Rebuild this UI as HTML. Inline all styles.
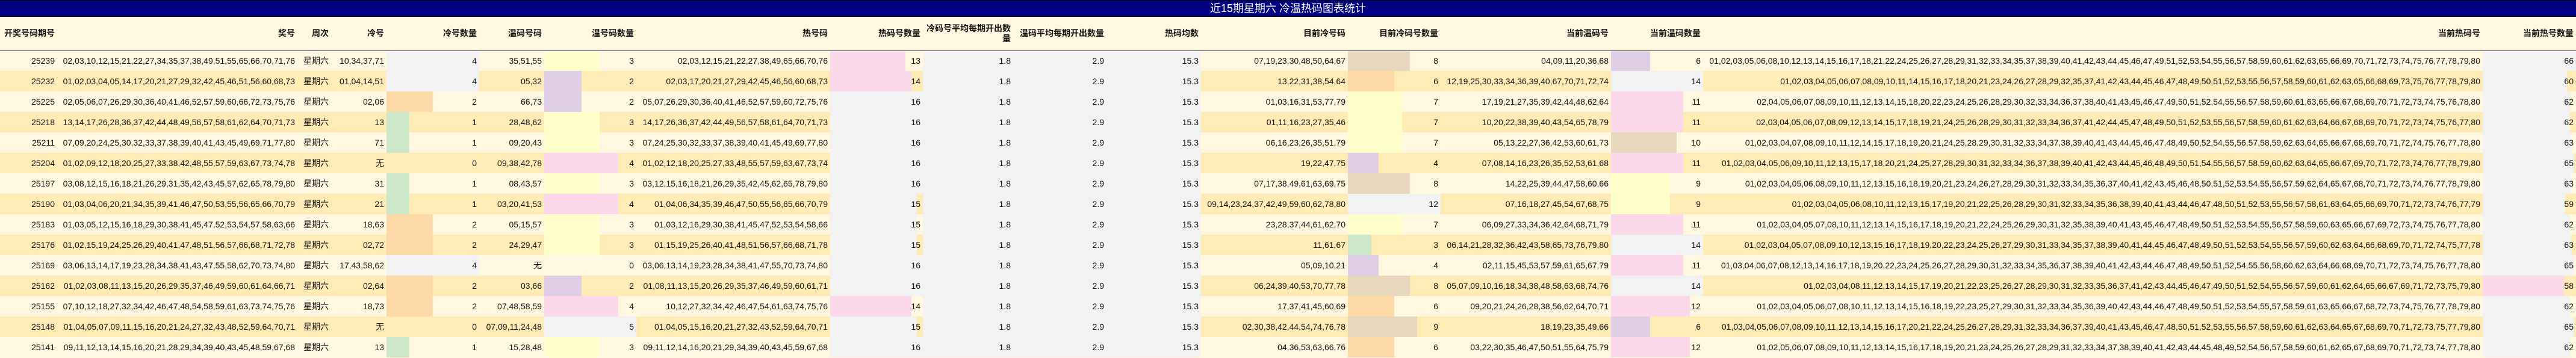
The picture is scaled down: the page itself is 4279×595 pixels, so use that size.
<!DOCTYPE html>
<html><head><meta charset="utf-8">
<style>
*{margin:0;padding:0;box-sizing:border-box}
body{width:4279px;height:595px;overflow:hidden;background:#fff7e0;font-family:"Liberation Sans","Noto Sans CJK SC",sans-serif;font-size:14px;color:#111}
.title{height:28px;background:#000080;border-top:1px solid #000;border-bottom:1px solid #000;color:#fff;text-align:center;font-size:18px;line-height:26px}
table{border-collapse:collapse;table-layout:fixed;width:4279px}
th{height:56px;font-weight:bold;text-align:right;padding:0 4px 0 0;vertical-align:middle;border-bottom:1px solid #000;line-height:17px;background:#fff7e0}
td{height:34px;text-align:right;padding:0 4px 0 0;white-space:nowrap;overflow:hidden;vertical-align:middle}
tr.a{background:#fff7e0}
tr.b{background:#ffebb6}
td.g{background:#f2f2f2}
</style></head><body>
<div class="title">近15期星期六 冷温热码图表统计</div>
<table>
<colgroup><col style="width:95px"><col style="width:399px"><col style="width:56px"><col style="width:92px"><col style="width:154px"><col style="width:108px"><col style="width:153px"><col style="width:322px"><col style="width:154px"><col style="width:150px"><col style="width:155px"><col style="width:157px"><col style="width:244px"><col style="width:154px"><col style="width:283px"><col style="width:153px"><col style="width:1295px"><col style="width:155px"></colgroup>
<tr><th>开奖号码期号</th><th>奖号</th><th>周次</th><th>冷号</th><th>冷号数量</th><th>温码号码</th><th>温号码数量</th><th>热号码</th><th>热码号数量</th><th>冷码号平均每期开出数量</th><th>温码平均每期开出数量</th><th>热码均数</th><th>目前冷号码</th><th>目前冷码号数量</th><th>当前温码号</th><th>当前温码数量</th><th>当前热码号</th><th>当前热号数量</th></tr>

<tr class="a"><td>25239</td><td>02,03,10,12,15,21,22,27,34,35,37,38,49,51,55,65,66,70,71,76</td><td>星期六</td><td>10,34,37,71</td><td style="background:linear-gradient(90deg,#f2f2f2 154px,#0000 154px)">4</td><td>35,51,55</td><td style="background:linear-gradient(90deg,#ffffcc 92px,#0000 92px)">3</td><td>02,03,12,15,21,22,27,38,49,65,66,70,76</td><td style="background:linear-gradient(90deg,#fcd9ea 125px,#0000 125px)">13</td><td class="g">1.8</td><td class="g">2.9</td><td class="g">15.3</td><td>07,19,23,30,48,50,64,67</td><td style="background:linear-gradient(90deg,#e6d7bd 103px,#0000 103px)">8</td><td>04,09,11,20,36,68</td><td style="background:linear-gradient(90deg,#e0cde6 65px,#0000 65px)">6</td><td>01,02,03,05,06,08,10,12,13,14,15,16,17,18,21,22,24,25,26,27,28,29,31,32,33,34,35,37,38,39,40,41,42,43,44,45,46,47,49,51,52,53,54,55,56,57,58,59,60,61,62,63,65,66,69,70,71,72,73,74,75,76,77,78,79,80</td><td style="background:linear-gradient(90deg,#f2f2f2 155px,#0000 155px)">66</td></tr>

<tr class="b"><td>25232</td><td>01,02,03,04,05,14,17,20,21,27,29,32,42,45,46,51,56,60,68,73</td><td>星期六</td><td>01,04,14,51</td><td style="background:linear-gradient(90deg,#f2f2f2 154px,#0000 154px)">4</td><td>05,32</td><td style="background:linear-gradient(90deg,#e0cde6 62px,#0000 62px)">2</td><td>02,03,17,20,21,27,29,42,45,46,56,60,68,73</td><td style="background:linear-gradient(90deg,#fcd9ea 135px,#0000 135px)">14</td><td class="g">1.8</td><td class="g">2.9</td><td class="g">15.3</td><td>13,22,31,38,54,64</td><td style="background:linear-gradient(90deg,#fdd9a8 77px,#0000 77px)">6</td><td>12,19,25,30,33,34,36,39,40,67,70,71,72,74</td><td style="background:linear-gradient(90deg,#f2f2f2 153px,#0000 153px)">14</td><td>01,02,03,04,05,06,07,08,09,10,11,14,15,16,17,18,20,21,23,24,26,27,28,29,32,35,37,41,42,43,44,45,46,47,48,49,50,51,52,53,55,56,57,58,59,60,61,62,63,65,66,68,69,73,75,76,77,78,79,80</td><td style="background:linear-gradient(90deg,#f2f2f2 140px,#0000 140px)">60</td></tr>

<tr class="a"><td>25225</td><td>02,05,06,07,26,29,30,36,40,41,46,52,57,59,60,66,72,73,75,76</td><td>星期六</td><td>02,06</td><td style="background:linear-gradient(90deg,#fdd9a8 77px,#0000 77px)">2</td><td>66,73</td><td style="background:linear-gradient(90deg,#e0cde6 62px,#0000 62px)">2</td><td>05,07,26,29,30,36,40,41,46,52,57,59,60,72,75,76</td><td style="background:linear-gradient(90deg,#f2f2f2 154px,#0000 154px)">16</td><td class="g">1.8</td><td class="g">2.9</td><td class="g">15.3</td><td>01,03,16,31,53,77,79</td><td style="background:linear-gradient(90deg,#ffffcc 90px,#0000 90px)">7</td><td>17,19,21,27,35,39,42,44,48,62,64</td><td style="background:linear-gradient(90deg,#fcd9ea 120px,#0000 120px)">11</td><td>02,04,05,06,07,08,09,10,11,12,13,14,15,18,20,22,23,24,25,26,28,29,30,32,33,34,36,37,38,40,41,43,45,46,47,49,50,51,52,54,55,56,57,58,59,60,61,63,65,66,67,68,69,70,71,72,73,74,75,76,78,80</td><td style="background:linear-gradient(90deg,#f2f2f2 145px,#0000 145px)">62</td></tr>

<tr class="b"><td>25218</td><td>13,14,17,26,28,36,37,42,44,48,49,56,57,58,61,62,64,70,71,73</td><td>星期六</td><td>13</td><td style="background:linear-gradient(90deg,#cce8c8 38px,#0000 38px)">1</td><td>28,48,62</td><td style="background:linear-gradient(90deg,#ffffcc 92px,#0000 92px)">3</td><td>14,17,26,36,37,42,44,49,56,57,58,61,64,70,71,73</td><td style="background:linear-gradient(90deg,#f2f2f2 154px,#0000 154px)">16</td><td class="g">1.8</td><td class="g">2.9</td><td class="g">15.3</td><td>01,11,16,23,27,35,46</td><td style="background:linear-gradient(90deg,#ffffcc 90px,#0000 90px)">7</td><td>10,20,22,38,39,40,43,54,65,78,79</td><td style="background:linear-gradient(90deg,#fcd9ea 120px,#0000 120px)">11</td><td>02,03,04,05,06,07,08,09,12,13,14,15,17,18,19,21,24,25,26,28,29,30,31,32,33,34,36,37,41,42,44,45,47,48,49,50,51,52,53,55,56,57,58,59,60,61,62,63,64,66,67,68,69,70,71,72,73,74,75,76,77,80</td><td style="background:linear-gradient(90deg,#f2f2f2 145px,#0000 145px)">62</td></tr>

<tr class="a"><td>25211</td><td>07,09,20,24,25,30,32,33,37,38,39,40,41,43,45,49,69,71,77,80</td><td>星期六</td><td>71</td><td style="background:linear-gradient(90deg,#cce8c8 38px,#0000 38px)">1</td><td>09,20,43</td><td style="background:linear-gradient(90deg,#ffffcc 92px,#0000 92px)">3</td><td>07,24,25,30,32,33,37,38,39,40,41,45,49,69,77,80</td><td style="background:linear-gradient(90deg,#f2f2f2 154px,#0000 154px)">16</td><td class="g">1.8</td><td class="g">2.9</td><td class="g">15.3</td><td>06,16,23,26,35,51,79</td><td style="background:linear-gradient(90deg,#ffffcc 90px,#0000 90px)">7</td><td>05,13,22,27,36,42,53,60,61,73</td><td style="background:linear-gradient(90deg,#e6d7bd 109px,#0000 109px)">10</td><td>01,02,03,04,07,08,09,10,11,12,14,15,17,18,19,20,21,24,25,28,29,30,31,32,33,34,37,38,39,40,41,43,44,45,46,47,48,49,50,52,54,55,56,57,58,59,62,63,64,65,66,67,68,69,70,71,72,74,75,76,77,78,80</td><td style="background:linear-gradient(90deg,#f2f2f2 147px,#0000 147px)">63</td></tr>

<tr class="b"><td>25204</td><td>01,02,09,12,18,20,25,27,33,38,42,48,55,57,59,63,67,73,74,78</td><td>星期六</td><td>无</td><td>0</td><td>09,38,42,78</td><td style="background:linear-gradient(90deg,#fcd9ea 123px,#0000 123px)">4</td><td>01,02,12,18,20,25,27,33,48,55,57,59,63,67,73,74</td><td style="background:linear-gradient(90deg,#f2f2f2 154px,#0000 154px)">16</td><td class="g">1.8</td><td class="g">2.9</td><td class="g">15.3</td><td>19,22,47,75</td><td style="background:linear-gradient(90deg,#e0cde6 51px,#0000 51px)">4</td><td>07,08,14,16,23,26,35,52,53,61,68</td><td style="background:linear-gradient(90deg,#fcd9ea 120px,#0000 120px)">11</td><td>01,02,03,04,05,06,09,10,11,12,13,15,17,18,20,21,24,25,27,28,29,30,31,32,33,34,36,37,38,39,40,41,42,43,44,45,46,48,49,50,51,54,55,56,57,58,59,60,62,63,64,65,66,67,69,70,71,72,73,74,76,77,78,79,80</td><td style="background:linear-gradient(90deg,#f2f2f2 152px,#0000 152px)">65</td></tr>

<tr class="a"><td>25197</td><td>03,08,12,15,16,18,21,26,29,31,35,42,43,45,57,62,65,78,79,80</td><td>星期六</td><td>31</td><td style="background:linear-gradient(90deg,#cce8c8 38px,#0000 38px)">1</td><td>08,43,57</td><td style="background:linear-gradient(90deg,#ffffcc 92px,#0000 92px)">3</td><td>03,12,15,16,18,21,26,29,35,42,45,62,65,78,79,80</td><td style="background:linear-gradient(90deg,#f2f2f2 154px,#0000 154px)">16</td><td class="g">1.8</td><td class="g">2.9</td><td class="g">15.3</td><td>07,17,38,49,61,63,69,75</td><td style="background:linear-gradient(90deg,#e6d7bd 103px,#0000 103px)">8</td><td>14,22,25,39,44,47,58,60,66</td><td style="background:linear-gradient(90deg,#ffffcc 98px,#0000 98px)">9</td><td>01,02,03,04,05,06,08,09,10,11,12,13,15,16,18,19,20,21,23,24,26,27,28,29,30,31,32,33,34,35,36,37,40,41,42,43,45,46,48,50,51,52,53,54,55,56,57,59,62,64,65,67,68,70,71,72,73,74,76,77,78,79,80</td><td style="background:linear-gradient(90deg,#f2f2f2 147px,#0000 147px)">63</td></tr>

<tr class="b"><td>25190</td><td>01,03,04,06,20,21,34,35,39,41,46,47,50,53,55,56,65,66,70,79</td><td>星期六</td><td>21</td><td style="background:linear-gradient(90deg,#cce8c8 38px,#0000 38px)">1</td><td>03,20,41,53</td><td style="background:linear-gradient(90deg,#fcd9ea 123px,#0000 123px)">4</td><td>01,04,06,34,35,39,46,47,50,55,56,65,66,70,79</td><td style="background:linear-gradient(90deg,#f2f2f2 144px,#0000 144px)">15</td><td class="g">1.8</td><td class="g">2.9</td><td class="g">15.3</td><td>09,14,23,24,37,42,49,59,60,62,78,80</td><td style="background:linear-gradient(90deg,#f2f2f2 154px,#0000 154px)">12</td><td>07,16,18,27,45,54,67,68,75</td><td style="background:linear-gradient(90deg,#ffffcc 98px,#0000 98px)">9</td><td>01,02,03,04,05,06,08,10,11,12,13,15,17,19,20,21,22,25,26,28,29,30,31,32,33,34,35,36,38,39,40,41,43,44,46,47,48,50,51,52,53,55,56,57,58,61,63,64,65,66,69,70,71,72,73,74,76,77,79</td><td style="background:linear-gradient(90deg,#f2f2f2 137px,#0000 137px)">59</td></tr>

<tr class="a"><td>25183</td><td>01,03,05,12,15,16,18,29,30,38,41,45,47,52,53,54,57,58,63,66</td><td>星期六</td><td>18,63</td><td style="background:linear-gradient(90deg,#fdd9a8 77px,#0000 77px)">2</td><td>05,15,57</td><td style="background:linear-gradient(90deg,#ffffcc 92px,#0000 92px)">3</td><td>01,03,12,16,29,30,38,41,45,47,52,53,54,58,66</td><td style="background:linear-gradient(90deg,#f2f2f2 144px,#0000 144px)">15</td><td class="g">1.8</td><td class="g">2.9</td><td class="g">15.3</td><td>23,28,37,44,61,62,70</td><td style="background:linear-gradient(90deg,#ffffcc 90px,#0000 90px)">7</td><td>06,09,27,33,34,36,42,64,68,71,79</td><td style="background:linear-gradient(90deg,#fcd9ea 120px,#0000 120px)">11</td><td>01,02,03,04,05,07,08,10,11,12,13,14,15,16,17,18,19,20,21,22,24,25,26,29,30,31,32,35,38,39,40,41,43,45,46,47,48,49,50,51,52,53,54,55,56,57,58,59,60,63,65,66,67,69,72,73,74,75,76,77,78,80</td><td style="background:linear-gradient(90deg,#f2f2f2 145px,#0000 145px)">62</td></tr>

<tr class="b"><td>25176</td><td>01,02,15,19,24,25,26,29,40,41,47,48,51,56,57,66,68,71,72,78</td><td>星期六</td><td>02,72</td><td style="background:linear-gradient(90deg,#fdd9a8 77px,#0000 77px)">2</td><td>24,29,47</td><td style="background:linear-gradient(90deg,#ffffcc 92px,#0000 92px)">3</td><td>01,15,19,25,26,40,41,48,51,56,57,66,68,71,78</td><td style="background:linear-gradient(90deg,#f2f2f2 144px,#0000 144px)">15</td><td class="g">1.8</td><td class="g">2.9</td><td class="g">15.3</td><td>11,61,67</td><td style="background:linear-gradient(90deg,#cce8c8 39px,#0000 39px)">3</td><td>06,14,21,28,32,36,42,43,58,65,73,76,79,80</td><td style="background:linear-gradient(90deg,#f2f2f2 153px,#0000 153px)">14</td><td>01,02,03,04,05,07,08,09,10,12,13,15,16,17,18,19,20,22,23,24,25,26,27,29,30,31,33,34,35,37,38,39,40,41,44,45,46,47,48,49,50,51,52,53,54,55,56,57,59,60,62,63,64,66,68,69,70,71,72,74,75,77,78</td><td style="background:linear-gradient(90deg,#f2f2f2 147px,#0000 147px)">63</td></tr>

<tr class="a"><td>25169</td><td>03,06,13,14,17,19,23,28,34,38,41,43,47,55,58,62,70,73,74,80</td><td>星期六</td><td>17,43,58,62</td><td style="background:linear-gradient(90deg,#f2f2f2 154px,#0000 154px)">4</td><td>无</td><td>0</td><td>03,06,13,14,19,23,28,34,38,41,47,55,70,73,74,80</td><td style="background:linear-gradient(90deg,#f2f2f2 154px,#0000 154px)">16</td><td class="g">1.8</td><td class="g">2.9</td><td class="g">15.3</td><td>05,09,10,21</td><td style="background:linear-gradient(90deg,#e0cde6 51px,#0000 51px)">4</td><td>02,11,15,45,53,57,59,61,65,67,79</td><td style="background:linear-gradient(90deg,#fcd9ea 120px,#0000 120px)">11</td><td>01,03,04,06,07,08,12,13,14,16,17,18,19,20,22,23,24,25,26,27,28,29,30,31,32,33,34,35,36,37,38,39,40,41,42,43,44,46,47,48,49,50,51,52,54,55,56,58,60,62,63,64,66,68,69,70,71,72,73,74,75,76,77,78,80</td><td style="background:linear-gradient(90deg,#f2f2f2 152px,#0000 152px)">65</td></tr>

<tr class="b"><td>25162</td><td>01,02,03,08,11,13,15,20,26,29,35,37,46,49,59,60,61,64,66,71</td><td>星期六</td><td>02,64</td><td style="background:linear-gradient(90deg,#fdd9a8 77px,#0000 77px)">2</td><td>03,66</td><td style="background:linear-gradient(90deg,#e0cde6 62px,#0000 62px)">2</td><td>01,08,11,13,15,20,26,29,35,37,46,49,59,60,61,71</td><td style="background:linear-gradient(90deg,#f2f2f2 154px,#0000 154px)">16</td><td class="g">1.8</td><td class="g">2.9</td><td class="g">15.3</td><td>06,24,39,40,53,70,77,78</td><td style="background:linear-gradient(90deg,#e6d7bd 103px,#0000 103px)">8</td><td>05,07,09,10,16,18,34,38,48,58,63,68,74,76</td><td style="background:linear-gradient(90deg,#f2f2f2 153px,#0000 153px)">14</td><td>01,02,03,04,08,11,12,13,14,15,17,19,20,21,22,23,25,26,27,28,29,30,31,32,33,35,36,37,41,42,43,44,45,46,47,49,50,51,52,54,55,56,57,59,60,61,62,64,65,66,67,69,71,72,73,75,79,80</td><td style="background:linear-gradient(90deg,#fcd9ea 135px,#0000 135px)">58</td></tr>

<tr class="a"><td>25155</td><td>07,10,12,18,27,32,34,42,46,47,48,54,58,59,61,63,73,74,75,76</td><td>星期六</td><td>18,73</td><td style="background:linear-gradient(90deg,#fdd9a8 77px,#0000 77px)">2</td><td>07,48,58,59</td><td style="background:linear-gradient(90deg,#fcd9ea 123px,#0000 123px)">4</td><td>10,12,27,32,34,42,46,47,54,61,63,74,75,76</td><td style="background:linear-gradient(90deg,#fcd9ea 135px,#0000 135px)">14</td><td class="g">1.8</td><td class="g">2.9</td><td class="g">15.3</td><td>17,37,41,45,60,69</td><td style="background:linear-gradient(90deg,#fdd9a8 77px,#0000 77px)">6</td><td>09,20,21,24,26,28,38,56,62,64,70,71</td><td style="background:linear-gradient(90deg,#fcd9ea 131px,#0000 131px)">12</td><td>01,02,03,04,05,06,07,08,10,11,12,13,14,15,16,18,19,22,23,25,27,29,30,31,32,33,34,35,36,39,40,42,43,44,46,47,48,49,50,51,52,53,54,55,57,58,59,61,63,65,66,67,68,72,73,74,75,76,77,78,79,80</td><td style="background:linear-gradient(90deg,#f2f2f2 145px,#0000 145px)">62</td></tr>

<tr class="b"><td>25148</td><td>01,04,05,07,09,11,15,16,20,21,24,27,32,43,48,52,59,64,70,71</td><td>星期六</td><td>无</td><td>0</td><td>07,09,11,24,48</td><td style="background:linear-gradient(90deg,#f2f2f2 153px,#0000 153px)">5</td><td>01,04,05,15,16,20,21,27,32,43,52,59,64,70,71</td><td style="background:linear-gradient(90deg,#f2f2f2 144px,#0000 144px)">15</td><td class="g">1.8</td><td class="g">2.9</td><td class="g">15.3</td><td>02,30,38,42,44,54,74,76,78</td><td style="background:linear-gradient(90deg,#e6d7bd 115px,#0000 115px)">9</td><td>18,19,23,35,49,66</td><td style="background:linear-gradient(90deg,#e0cde6 65px,#0000 65px)">6</td><td>01,03,04,05,06,07,08,09,10,11,12,13,14,15,16,17,20,21,22,24,25,26,27,28,29,31,32,33,34,36,37,39,40,41,43,45,46,47,48,50,51,52,53,55,56,57,58,59,60,61,62,63,64,65,67,68,69,70,71,72,73,75,77,79,80</td><td style="background:linear-gradient(90deg,#f2f2f2 152px,#0000 152px)">65</td></tr>

<tr class="a"><td>25141</td><td>09,11,12,13,14,15,16,20,21,28,29,34,39,40,43,45,48,59,67,68</td><td>星期六</td><td>13</td><td style="background:linear-gradient(90deg,#cce8c8 38px,#0000 38px)">1</td><td>15,28,48</td><td style="background:linear-gradient(90deg,#ffffcc 92px,#0000 92px)">3</td><td>09,11,12,14,16,20,21,29,34,39,40,43,45,59,67,68</td><td style="background:linear-gradient(90deg,#f2f2f2 154px,#0000 154px)">16</td><td class="g">1.8</td><td class="g">2.9</td><td class="g">15.3</td><td>04,36,53,63,66,76</td><td style="background:linear-gradient(90deg,#fdd9a8 77px,#0000 77px)">6</td><td>03,22,30,35,46,47,50,51,55,64,75,79</td><td style="background:linear-gradient(90deg,#fcd9ea 131px,#0000 131px)">12</td><td>01,02,05,06,07,08,09,10,11,12,13,14,15,16,17,18,19,20,21,23,24,25,26,27,28,29,31,32,33,34,37,38,39,40,41,42,43,44,45,48,49,52,54,56,57,58,59,60,61,62,65,67,68,69,70,71,72,73,74,77,78,80</td><td style="background:linear-gradient(90deg,#f2f2f2 145px,#0000 145px)">62</td></tr>
</table>
</body></html>
